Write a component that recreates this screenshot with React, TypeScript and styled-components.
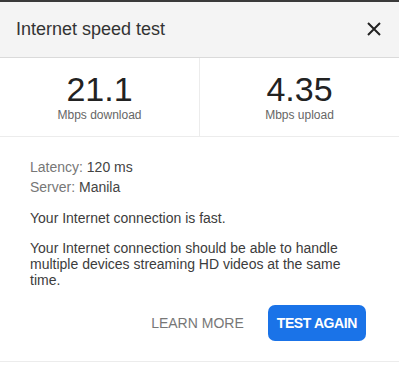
import React from "react";
import styled, { createGlobalStyle } from "styled-components";

const Global = createGlobalStyle`
  html, body { margin: 0; padding: 0; background: #fff; }
  body { font-family: "Liberation Sans", Arial, sans-serif; }
  * { box-sizing: border-box; }
`;

const Card = styled.div`
  width: 399px;
  height: 365px;
  background: #fff;
  border-top: 2px solid #3a3a3a;
  display: flex;
  flex-direction: column;
`;

const Header = styled.div`
  height: 56px;
  background: #f4f4f4;
  border-bottom: 1px solid #dadada;
  display: flex;
  align-items: center;
  justify-content: space-between;
  padding: 0 18px 1px 16px;
`;

const Title = styled.div`
  font-size: 18px;
  line-height: 20px;
  color: #333;
`;

const CloseButton = styled.button`
  border: 0;
  background: none;
  padding: 0;
  width: 15px;
  height: 15px;
  display: flex;
  align-items: center;
  justify-content: center;
  cursor: pointer;
`;

const Stats = styled.div`
  display: grid;
  grid-template-columns: 200px 1fr;
  border-bottom: 1px solid #ececec;
`;

const StatCell = styled.div<{ $divider?: boolean }>`
  display: flex;
  flex-direction: column;
  align-items: center;
  padding: 14px 0 14px;
  gap: 2px;
  border-right: ${(p) => (p.$divider ? "1px solid #ececec" : "none")};
`;

const Number = styled.div`
  font-size: 34px;
  line-height: 34px;
  color: #222;
`;

const Unit = styled.div`
  font-size: 12px;
  line-height: 14px;
  color: #666;
`;

const Body = styled.div`
  padding: 20px 30px 0 30px;
  display: flex;
  flex-direction: column;
`;

const Meta = styled.div`
  font-size: 14px;
  line-height: 20px;
  color: #777;
  margin-bottom: 13px;
`;

const MetaValue = styled.span`
  color: #444;
`;

const Para = styled.p<{ $gap?: number }>`
  margin: 0 0 ${(p) => p.$gap ?? 0}px 0;
  font-size: 14px;
  line-height: 16px;
  color: #3c3c3c;
`;

const Actions = styled.div`
  display: flex;
  justify-content: flex-end;
  align-items: center;
  gap: 24px;
  padding: 17px 33px 20px 0;
  border-bottom: 1px solid #ececec;
`;

const TextButton = styled.button`
  border: 0;
  background: none;
  padding: 0;
  font-family: inherit;
  font-size: 14px;
  color: #777;
  cursor: pointer;
`;

const PrimaryButton = styled.button`
  border: 0;
  background: #1a73e8;
  color: #fff;
  height: 36px;
  padding: 0 9px;
  border-radius: 7px;
  font-family: inherit;
  font-weight: bold;
  font-size: 14px;
  letter-spacing: -0.4px;
  cursor: pointer;
`;

export default function App() {
  return (
    <>
      <Global />
      <Card>
        <Header>
          <Title>Internet speed test</Title>
          <CloseButton aria-label="Close">
            <svg width="14" height="14" viewBox="0 0 14 14">
              <path d="M1 1 L13 13 M13 1 L1 13" stroke="#222" strokeWidth="2" />
            </svg>
          </CloseButton>
        </Header>
        <Stats>
          <StatCell $divider>
            <Number>21.1</Number>
            <Unit>Mbps download</Unit>
          </StatCell>
          <StatCell>
            <Number>4.35</Number>
            <Unit>Mbps upload</Unit>
          </StatCell>
        </Stats>
        <Body>
          <Meta>
            <div>
              Latency: <MetaValue>120 ms</MetaValue>
            </div>
            <div>
              Server: <MetaValue>Manila</MetaValue>
            </div>
          </Meta>
          <Para $gap={14}>Your Internet connection is fast.</Para>
          <Para>
            Your Internet connection should be able to handle multiple devices
            streaming HD videos at the same time.
          </Para>
        </Body>
        <Actions>
          <TextButton>LEARN MORE</TextButton>
          <PrimaryButton>TEST AGAIN</PrimaryButton>
        </Actions>
      </Card>
    </>
  );
}
